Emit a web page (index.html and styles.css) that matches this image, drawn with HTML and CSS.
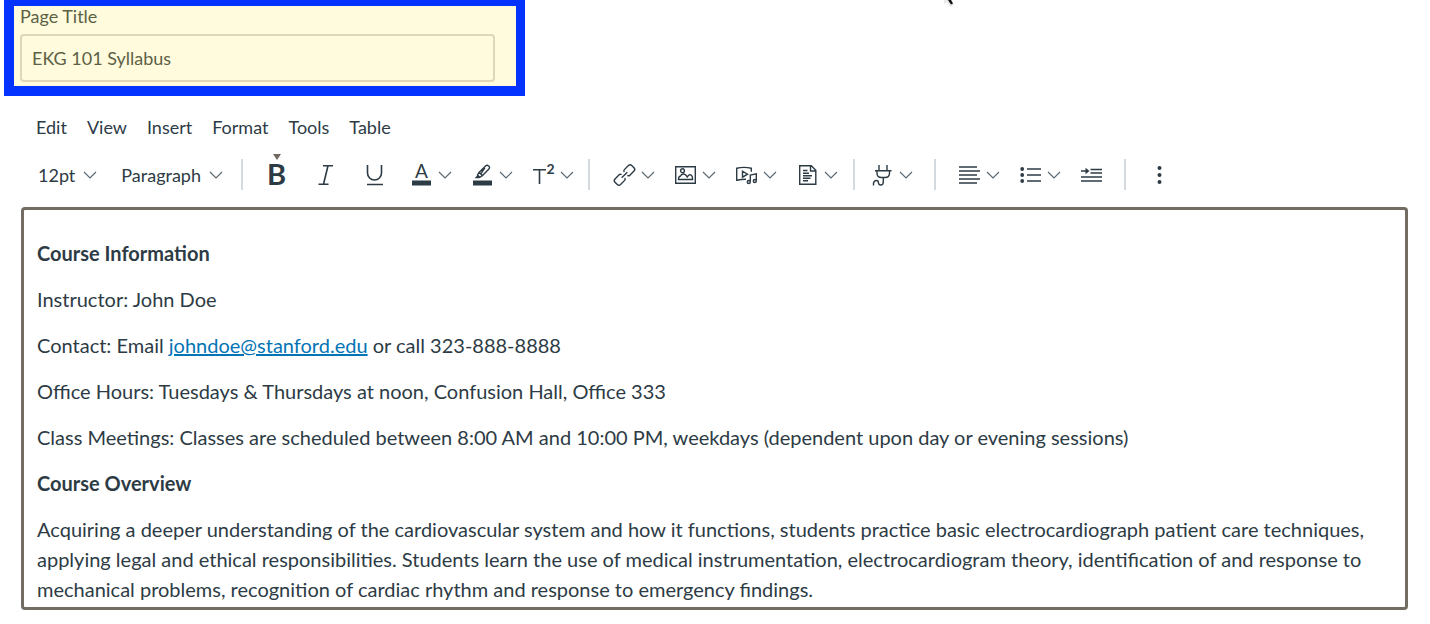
FILE: index.html
```html
<!DOCTYPE html>
<html lang="en">
<head>
<meta charset="utf-8">
<title>EKG 101 Syllabus</title>
<link rel="stylesheet" href="styles.css">
</head>
<body>
<svg class="pointer" width="16" height="8" viewBox="0 0 16 8" aria-hidden="true"><path d="M2 0v4l3-2 3 5 4-2-2-5z" fill="#e9e9e9"/><path d="M6 0h3l2 3.500-2 1z" fill="#111"/></svg>
<svg class="defs" aria-hidden="true">
  <symbol id="chev" viewBox="0 0 14 8"><path d="M1 1l6 6 6-6" fill="none" stroke="#5b6871" stroke-width="1.200"/></symbol>
</svg>

<div class="title-box">
  <label for="page-title">Page Title</label>
  <input id="page-title" type="text" value="EKG 101 Syllabus">
</div>

<nav class="menubar" aria-label="Editor menu">
  <button type="button">Edit</button>
  <button type="button">View</button>
  <button type="button">Insert</button>
  <button type="button">Format</button>
  <button type="button">Tools</button>
  <button type="button">Table</button>
</nav>

<div class="toolbar" role="toolbar" aria-label="Formatting">
  <div class="group group-text">
    <button type="button" class="select">12pt <svg class="chev"><use href="#chev"/></svg></button>
    <button type="button" class="select">Paragraph <svg class="chev"><use href="#chev"/></svg></button>
  </div>
  <div class="group group-format">
    <button type="button" class="plain marked" aria-label="Bold"><svg class="icon" viewBox="0 0 21 22"><text class="bold" x="10.500" y="21" text-anchor="middle">B</text></svg></button>
    <button type="button" class="plain" aria-label="Italic"><svg class="icon" viewBox="0 0 21 22"><path d="M8 1.700h10M3.500 20.300h10M13 1.700L8.500 20.300" class="line"/></svg></button>
    <button type="button" class="plain" aria-label="Underline"><svg class="icon" viewBox="0 0 21 22"><path d="M3.500 1v8a7 7 0 0 0 14 0V1M3 20.500h16" class="line"/></svg></button>
    <button type="button" class="menu" aria-label="Text color"><svg class="icon" viewBox="0 0 21 22"><text class="letter" x="10.500" y="14" text-anchor="middle">A</text><path d="M1 16.500h19v5H1z" class="solid"/></svg><svg class="chev"><use href="#chev"/></svg></button>
    <button type="button" class="menu" aria-label="Highlight color"><svg class="icon" viewBox="0 0 21 22"><path d="M7 8.500L13.500 2q1.500-1.500 3.200 0t0 3.200L10.500 11.500zM7 8.500L5.500 11l2.300 2.300 2.700-1.800M13 3.500l-4 6" class="line thin"/><path d="M5.500 11l-2.800 3.200h4.500l.8-1z" class="solid"/><path d="M1 16.500h19v5H1z" class="solid"/></svg><svg class="chev"><use href="#chev"/></svg></button>
    <button type="button" class="menu" aria-label="Superscript"><svg class="icon" viewBox="0 0 21 22"><path d="M0 5.800h13M6.500 5.800V20" class="line"/><text class="sup" x="13.500" y="10">2</text></svg><svg class="chev"><use href="#chev"/></svg></button>
  </div>
  <div class="group group-insert">
    <button type="button" class="menu" aria-label="Link"><svg class="icon" viewBox="0 0 21 22"><g class="line thin" transform="rotate(-45 10.500 11)"><path d="M8.500 13.200q0 1.700-1.700 1.700H1q-2.300 0-2.300-2.300V9.400q0-2.300 2.300-2.300h5.800q1.700 0 1.700 1.700M12.500 8.800q0-1.700 1.700-1.700H20q2.300 0 2.300 2.300v3.200q0 2.300-2.300 2.300h-5.800q-1.700 0-1.700-1.700M6.500 11h8"/></g></svg><svg class="chev"><use href="#chev"/></svg></button>
    <button type="button" class="menu" aria-label="Image"><svg class="icon" viewBox="0 0 21 22"><path d="M.7 2.700h19.600v16.600H.7zM3.500 15.500h14V14c0-3-3-4.500-4.500-2l-.8 1C10.500 9.500 7 9 5.500 12c-1.500.2-2 1.500-2 3.500z" class="line thin"/><circle cx="7.500" cy="6.700" r="1.900" class="line thin"/></svg><svg class="chev"><use href="#chev"/></svg></button>
    <button type="button" class="menu" aria-label="Media"><svg class="icon" viewBox="0 0 21 22"><path d="M10 15.200q-4.500 0-9.300 1V4.200q7.300-1.700 14.600 0v3.500M6.500 7.200v6l5-3zM14.300 17.500v-6.500l6-1.200v6.700" class="line thin"/><circle cx="12.800" cy="18" r="1.500" class="line thin"/><circle cx="18.800" cy="17" r="1.500" class="line thin"/></svg><svg class="chev"><use href="#chev"/></svg></button>
    <button type="button" class="menu" aria-label="Document"><svg class="icon" viewBox="0 0 21 22"><path d="M2.700 1.700h11.600l4.500 4.500v14.100H2.700zM13.500 2v5h5M6 6.500h4.500M6 9.200h6M6 11.700h9M6 14.200h7.500M6 16.700h5" class="line thin"/></svg><svg class="chev"><use href="#chev"/></svg></button>
  </div>
  <div class="group group-apps">
    <button type="button" class="menu" aria-label="Apps"><svg class="icon" viewBox="0 0 21 22"><path d="M7 1v5.500M15 1v5.500M3 6.700h16.500M5 6.700v2.500q0 4.300 4.500 4.300h3.500q4.500 0 4.500-4.300V6.700M11.300 13.500v4q0 3.500-2.500 3.500t-2.500-3q0-1.500-2-1.500T1.500 19v2.500" class="line thin"/></svg><svg class="chev"><use href="#chev"/></svg></button>
  </div>
  <div class="group group-align">
    <button type="button" class="menu" aria-label="Align"><svg class="icon" viewBox="0 0 21 22"><path d="M0 3h18M0 7h21M0 11h18M0 15h21M0 19h18" class="line"/></svg><svg class="chev"><use href="#chev"/></svg></button>
    <button type="button" class="menu" aria-label="List"><svg class="icon" viewBox="0 0 21 22"><path d="M7 5h14M7 11h14M7 17h14" class="line"/><circle cx="2.200" cy="5" r="1.900" class="solid"/><circle cx="2.200" cy="11" r="1.900" class="solid"/><circle cx="2.200" cy="17" r="1.900" class="solid"/></svg><svg class="chev"><use href="#chev"/></svg></button>
    <button type="button" class="menu" aria-label="Increase indent"><svg class="icon" viewBox="0 0 21 22"><path d="M9.500 5.500H21M9.500 9H21M0 13h21M0 17h21M0 7h5" class="line"/><path d="M4.500 3.700L8.500 7l-4 3.300z" class="solid"/></svg></button>
  </div>
  <div class="group group-more">
    <button type="button" class="menu" aria-label="More"><svg class="icon" viewBox="0 0 21 22"><circle cx="10.500" cy="4" r="2" class="solid"/><circle cx="10.500" cy="11" r="2" class="solid"/><circle cx="10.500" cy="18" r="2" class="solid"/></svg></button>
  </div>
</div>

<main class="editor">
  <p><strong>Course Information</strong></p>
  <p>Instructor: John Doe</p>
  <p>Contact: Email <a href="mailto:johndoe@stanford.edu">johndoe@stanford.edu</a> or call 323-888-8888</p>
  <p>Office Hours: Tuesdays &amp; Thursdays at noon, Confusion Hall, Office 333</p>
  <p>Class Meetings: Classes are scheduled between 8:00 AM and 10:00 PM, weekdays (dependent upon day or evening sessions)</p>
  <p><strong>Course Overview</strong></p>
  <p>Acquiring a deeper understanding of the cardiovascular system and how it functions, students practice basic electrocardiograph patient care techniques, applying legal and ethical responsibilities. Students learn the use of medical instrumentation, electrocardiogram theory, identification of and response to mechanical problems, recognition of cardiac rhythm and response to emergency findings.</p>
</main>
</body>
</html>
```

FILE: styles.css
```css
* { box-sizing: border-box; }

body {
  margin: 0;
  background: #fff;
  color: #2d3b45;
  font: 18px/24px Lato, sans-serif;
}

button {
  padding: 0;
  border: 0;
  background: none;
  color: inherit;
  font: inherit;
  cursor: pointer;
}

.defs { display: none; }

.pointer {
  position: absolute;
  top: 0;
  left: 942px;
}

.title-box {
  display: flex;
  flex-direction: column;
  gap: 8px;
  max-width: 521px;
  margin-left: 4px;
  padding: 0 21px 4px 6px;
  border: solid #0432ff;
  border-width: 6px 9px 10px 10px;
  background: #fffbdc;
  color: #5c6146;
}

.title-box label { line-height: 20px; }

.title-box input {
  width: 100%;
  height: 48px;
  padding: 0 10px;
  border: 2px solid #ded7b8;
  border-radius: 4px;
  background: transparent;
  color: inherit;
  font: inherit;
}

.menubar {
  display: flex;
  gap: 20px;
  padding: 19px 36px 0;
}

.toolbar {
  display: flex;
  align-items: center;
  padding: 20px 0 17px 38px;
}

.group {
  display: flex;
  align-items: center;
  height: 31px;
  border-left: 2px solid #d3d9dc;
}

.group-text { gap: 24px; padding-right: 18px; border: 0; }
.group-format { padding: 0 4px 0 9px; }
.group-insert { padding: 0 5px 0 14px; }
.group-apps { padding: 0 11px 0 7px; }
.group-align { padding: 0 12px 0 13px; }
.group-more { padding-left: 13px; }

.select {
  display: flex;
  align-items: center;
  gap: 8px;
}

.plain {
  position: relative;
  width: 49px;
  text-align: center;
}

.plain + .menu { margin-left: 2px; }

.marked::before {
  content: "";
  position: absolute;
  top: -10px;
  left: 21px;
  border: solid transparent;
  border-width: 6px 4px 0;
  border-top-color: #6f685e;
}

.menu {
  display: flex;
  align-items: center;
  gap: 6px;
  padding: 0 10px;
}

.icon {
  display: block;
  width: 21px;
  height: 22px;
  overflow: visible;
}

.plain .icon { margin: 0 auto; }

.chev {
  display: block;
  width: 14px;
  height: 8px;
}

.line {
  fill: none;
  stroke: #2d3b45;
  stroke-width: 1.6;
}

.thin { stroke-width: 1.4; }
.solid { fill: #2d3b45; }

.icon text { fill: #2d3b45; }
.bold { font-size: 29px; font-weight: 700; }
.letter { font-size: 19px; }
.sup { font-size: 14px; font-weight: 700; }

.editor {
  margin: 0 22px 15px 21px;
  padding: 28px 13px 3px;
  border: 3px solid #736c63;
  border-radius: 4px;
  font-size: 20px;
  line-height: 30px;
}

.editor p { margin: 0 0 16px; }
.editor p:last-child { margin: 0; }
.editor a { color: #0374b5; }
```
